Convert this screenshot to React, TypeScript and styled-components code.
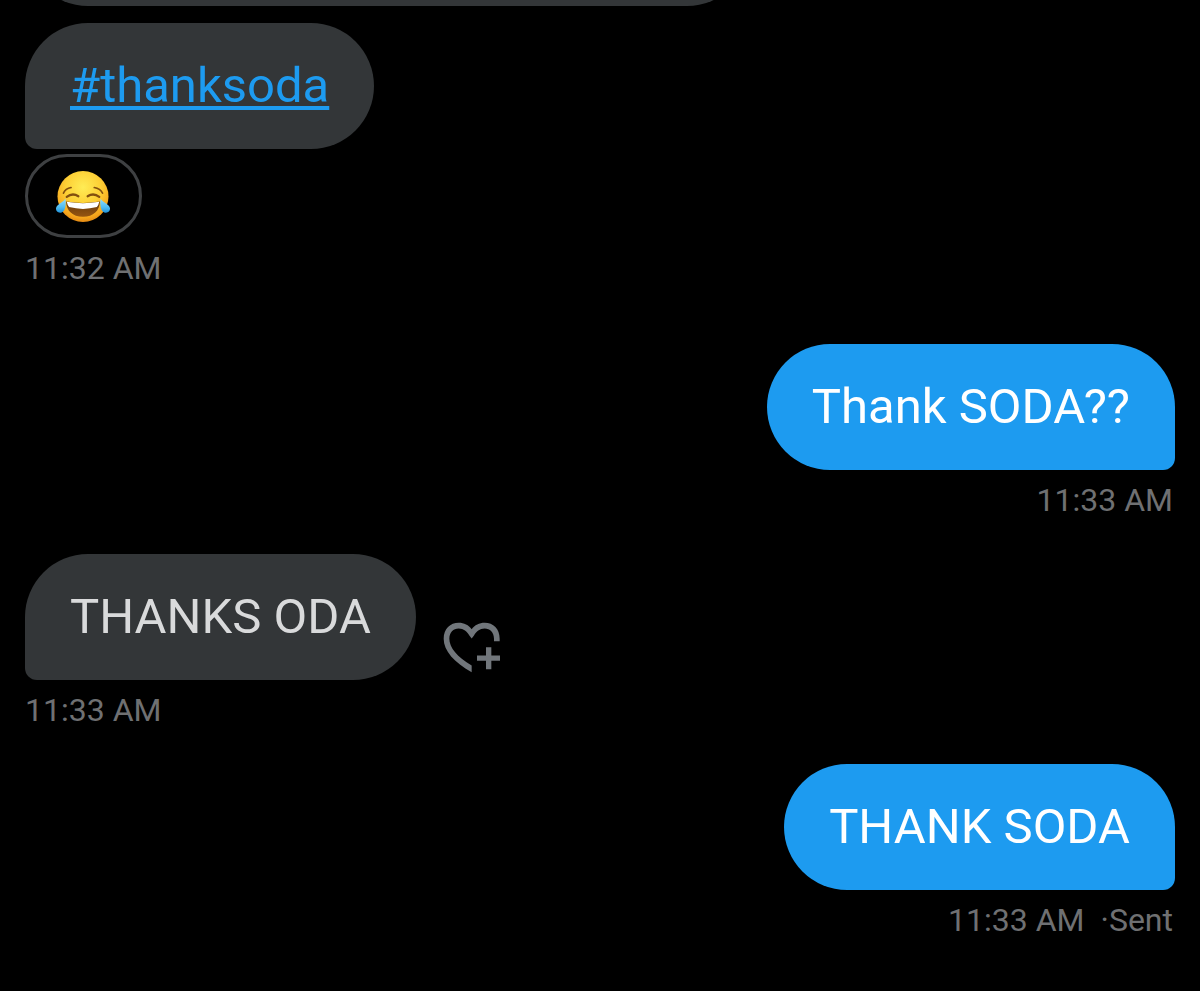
import React from "react";
import styled, { createGlobalStyle } from "styled-components";

const GlobalStyle = createGlobalStyle`
  * { box-sizing: border-box; }
  body {
    margin: 0;
    background: #000;
    font-family: Roboto, "Liberation Sans", sans-serif;
  }
`;

type Side = "in" | "out";

const Conversation = styled.main`
  display: flex;
  flex-direction: column;
  min-height: 100vh;
  padding: 0 25px 16px;
  background: #000;
`;

const EarlierMessage = styled.div`
  display: flex;
  align-items: flex-end;
  height: 6px;
  margin-bottom: 17px;
  overflow: hidden;
`;

const EarlierBubble = styled.div`
  flex: none;
  width: 63%;
  height: 126px;
  border-radius: 63px;
  background: #333638;
`;

const Message = styled.article<{ $side: Side; $spaced?: boolean }>`
  display: flex;
  flex-direction: column;
  align-items: ${(p) => (p.$side === "in" ? "flex-start" : "flex-end")};
  margin-bottom: ${(p) => (p.$spaced ? "56px" : "34px")};
`;

const BubbleRow = styled.div`
  display: flex;
  align-items: flex-end;
  gap: 27px;
`;

const Bubble = styled.p<{ $side: Side }>`
  margin: 0;
  padding: 35px 45px;
  font-size: 49px;
  line-height: 56px;
  color: ${(p) => (p.$side === "in" ? "#d9dadb" : "#fff")};
  background: ${(p) => (p.$side === "in" ? "#333638" : "#1d9bf0")};
  border-radius: ${(p) =>
    p.$side === "in" ? "63px 63px 63px 12px" : "63px 63px 12px 63px"};
`;

const Hashtag = styled.a`
  color: #1d9bf0;
  text-decoration: underline;
  text-decoration-thickness: 4px;
  text-underline-offset: 4px;
  text-decoration-skip-ink: none;
`;

const Reaction = styled.button`
  display: flex;
  align-items: center;
  justify-content: center;
  width: 117px;
  height: 84px;
  margin-top: 5px;
  padding: 0 2px 0 0;
  border: 3px solid #3e4042;
  border-radius: 42px;
  background: #000;
`;

const AddReaction = styled.button`
  display: flex;
  padding: 0 0 7px;
  border: 0;
  background: none;
  color: #71767b;
`;

const Meta = styled.footer`
  display: flex;
  gap: 16px;
  margin-top: 10px;
  padding-right: 2px;
  font-size: 32px;
  line-height: 40px;
  color: #6f7072;
`;

const JoyFace = () => (
  <svg width="56" height="53" viewBox="120 75 168 160" aria-hidden="true">
    <defs>
      <radialGradient id="face" cx="0.5" cy="0.32" r="0.7">
        <stop offset="0" stopColor="#ffec55" />
        <stop offset="0.5" stopColor="#fdcf35" />
        <stop offset="0.85" stopColor="#f6a51c" />
        <stop offset="1" stopColor="#e08312" />
      </radialGradient>
      <linearGradient id="tear" x1="0" y1="0" x2="0" y2="1">
        <stop offset="0" stopColor="#8fdcff" />
        <stop offset="0.6" stopColor="#50bdf2" />
        <stop offset="1" stopColor="#1f93dc" />
      </linearGradient>
      <linearGradient id="mouth" x1="0" y1="0" x2="0" y2="1">
        <stop offset="0" stopColor="#63370a" />
        <stop offset="1" stopColor="#965511" />
      </linearGradient>
    </defs>
    <circle cx="204" cy="155" r="77" fill="url(#face)" />
    <g fill="none" stroke="#83500e" strokeLinecap="round">
      <path d="M145 145 Q151 131 168 128" strokeWidth="5" />
      <path d="M238 128 Q256 131 263 145" strokeWidth="5" />
      <path d="M155 156 Q172 143 190 154" strokeWidth="7" />
      <path d="M218 154 Q236 143 253 156" strokeWidth="7" />
    </g>
    <path d="M153 170 Q204 179 255 170 C254 198 236 216 204 216 S154 198 153 170Z" fill="url(#mouth)" />
    <path d="M155 171 Q204 180 253 171 Q251 182 246 187 Q204 198 162 187 Q157 182 155 171Z" fill="#fff" />
    <path d="M151 162 C154 184 149 203 136 204 C123 205 118 191 127 182 C135 174 145 172 151 162Z" fill="url(#tear)" />
    <path d="M257 162 C254 184 259 203 272 204 C285 205 290 191 281 182 C273 174 263 172 257 162Z" fill="url(#tear)" />
  </svg>
);

const HeartPlus = () => (
  <svg width="58" height="51" viewBox="39 48 174 152" fill="currentColor" aria-hidden="true">
    <path d="M209 105H192V98C192 78 180 67 164 67C149 67 139 76 132 88L125 97L118 88C111 76 101 67 86 67C70 67 58 79 58 98C58 124 82 154 125 178V198C73 170 41 134 41 98C41 68 61 50 86 50C102 50 116 57 125 69C134 57 148 50 164 50C190 50 209 68 209 98Z" />
    <path d="M168 123H184V148H210V164H184V189H168V164H141V148H168Z" />
  </svg>
);

export default function App() {
  return (
    <>
      <GlobalStyle />
      <Conversation>
        <EarlierMessage>
          <EarlierBubble />
        </EarlierMessage>

        <Message $side="in" $spaced>
          <Bubble $side="in">
            <Hashtag href="#thanksoda">#thanksoda</Hashtag>
          </Bubble>
          <Reaction type="button" aria-label="Face with tears of joy">
            <JoyFace />
          </Reaction>
          <Meta>
            <time>11:32 AM</time>
          </Meta>
        </Message>

        <Message $side="out">
          <Bubble $side="out">Thank SODA??</Bubble>
          <Meta>
            <time>11:33 AM</time>
          </Meta>
        </Message>

        <Message $side="in">
          <BubbleRow>
            <Bubble $side="in">THANKS ODA</Bubble>
            <AddReaction type="button" aria-label="Add reaction">
              <HeartPlus />
            </AddReaction>
          </BubbleRow>
          <Meta>
            <time>11:33 AM</time>
          </Meta>
        </Message>

        <Message $side="out">
          <Bubble $side="out">THANK SODA</Bubble>
          <Meta>
            <time>11:33 AM</time>
            <span>·Sent</span>
          </Meta>
        </Message>
      </Conversation>
    </>
  );
}
